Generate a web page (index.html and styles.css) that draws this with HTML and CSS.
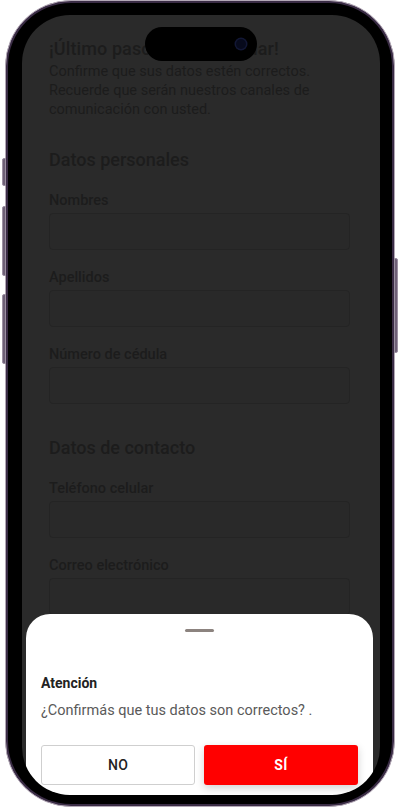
FILE: index.html
```html
<!DOCTYPE html>
<html lang="es">
<head>
<meta charset="utf-8">
<title>Confirmar datos</title>
<link rel="stylesheet" href="styles.css">
</head>
<body>
<div class="device">
  <span class="btn btn-l1"></span>
  <span class="btn btn-l2"></span>
  <span class="btn btn-l3"></span>
  <span class="btn btn-r1"></span>
  <div class="bezel">
    <div class="screen">
      <div class="content">
        <h1 class="title">¡Último paso para continuar!</h1>
        <p class="lead">Confirme que sus datos estén correctos. Recuerde que serán nuestros canales de comunicación con usted.</p>

        <h2 class="section">Datos personales</h2>
        <div class="field">
          <label class="label">Nombres</label>
          <div class="input"></div>
        </div>
        <div class="field">
          <label class="label">Apellidos</label>
          <div class="input"></div>
        </div>
        <div class="field">
          <label class="label">Número de cédula</label>
          <div class="input"></div>
        </div>

        <h2 class="section section-2">Datos de contacto</h2>
        <div class="field">
          <label class="label">Teléfono celular</label>
          <div class="input"></div>
        </div>
        <div class="field">
          <label class="label">Correo electrónico</label>
          <div class="input"></div>
        </div>
      </div>

      <div class="island"><span class="cam"></span></div>

      <div class="sheet">
        <div class="handle"></div>
        <div class="sheet-title">Atención</div>
        <div class="sheet-text">¿Confirmás que tus datos son correctos? .</div>
        <div class="actions">
          <button class="action action-no">NO</button>
          <button class="action action-yes">SÍ</button>
        </div>
      </div>
    </div>
  </div>
</div>
</body>
</html>
```

FILE: styles.css
```css
* { box-sizing: border-box; }

html, body {
  margin: 0;
  padding: 0;
  background: #ffffff;
  width: 400px;
  height: 812px;
  overflow: hidden;
  font-family: "Roboto", "Noto Sans", sans-serif;
}

.device {
  position: relative;
  margin: 0 5px;
  width: 390px;
  height: 807px;
  border-radius: 66px;
  background: #3a2c45;
  border: 1px solid #b3a8b6;
  padding: 2px;
}

.btn {
  position: absolute;
  width: 4px;
  background: #6e6076;
  border: 1px solid #9c90a2;
}
.btn-l1 { left: -4px; top: 157px; height: 28px; border-radius: 2px 0 0 2px; }
.btn-l2 { left: -4px; top: 205px; height: 70px; border-radius: 2px 0 0 2px; }
.btn-l3 { left: -4px; top: 293px; height: 70px; border-radius: 2px 0 0 2px; }
.btn-r1 { right: -4px; top: 257px; height: 95px; border-radius: 0 2px 2px 0; }

.bezel {
  width: 100%;
  height: 100%;
  background: #000000;
  border-radius: 63px;
  padding: 12px 12px 9px 14px;
}

.screen {
  position: relative;
  width: 358px;
  height: 780px;
  border-radius: 48px;
  overflow: hidden;
  background: #2a2a2a;
}

.content {
  padding: 22px 30px 0 27px;
  color: #1c1c1c;
}

.title {
  margin: 0;
  font-size: 18px;
  line-height: 24px;
  font-weight: 500;
  letter-spacing: 0.1px;
}

.lead {
  margin: 1px 0 0;
  font-size: 14.5px;
  line-height: 19px;
  font-weight: 400;
}

.section {
  margin: 30px 0 0;
  font-size: 18px;
  line-height: 22px;
  font-weight: 500;
}

.section-2 { margin-top: 33px; }

.field {
  display: flex;
  flex-direction: column;
  gap: 3px;
  margin-top: 21px;
}
.field + .field { margin-top: 19px; }

.label {
  font-size: 14.5px;
  line-height: 18px;
  font-weight: 500;
}

.input {
  height: 37px;
  border: 1px solid #242424;
  border-radius: 4px;
  background: #292929;
}

.island {
  position: absolute;
  left: 123px;
  top: 12px;
  width: 112px;
  height: 34px;
  border-radius: 17px;
  background: #000000;
}

.cam {
  position: absolute;
  right: 11px;
  top: 12px;
  width: 10px;
  height: 10px;
  border-radius: 50%;
  background: #070a1c;
  box-shadow: 0 0 0 1.5px #121735;
}

.sheet {
  position: absolute;
  left: 4px;
  right: 7px;
  bottom: 0;
  height: 181px;
  background: #ffffff;
  border-radius: 24px 24px 0 0;
  padding: 15px 15px 0;
  display: flex;
  flex-direction: column;
}

.handle {
  align-self: center;
  width: 29px;
  height: 3px;
  border-radius: 2px;
  background: #8c837f;
}

.sheet-title {
  margin-top: 42px;
  font-size: 14px;
  line-height: 18px;
  font-weight: 700;
  color: #222222;
}

.sheet-text {
  margin-top: 10px;
  font-size: 14.5px;
  line-height: 18px;
  color: #5a5a5a;
}

.actions {
  margin-top: 25px;
  display: grid;
  grid-template-columns: 1fr 1fr;
  gap: 9px;
}

.action {
  height: 40px;
  border-radius: 3px;
  font-family: inherit;
  font-size: 14px;
  font-weight: 500;
  letter-spacing: 0.3px;
  padding: 0;
}

.action-no {
  background: #ffffff;
  border: 1px solid #cfcfcf;
  color: #222222;
}

.action-yes {
  background: #ff0000;
  border: none;
  color: #ffffff;
  font-weight: 700;
  box-shadow: 0 3px 8px rgba(0, 0, 0, 0.18);
}
```
